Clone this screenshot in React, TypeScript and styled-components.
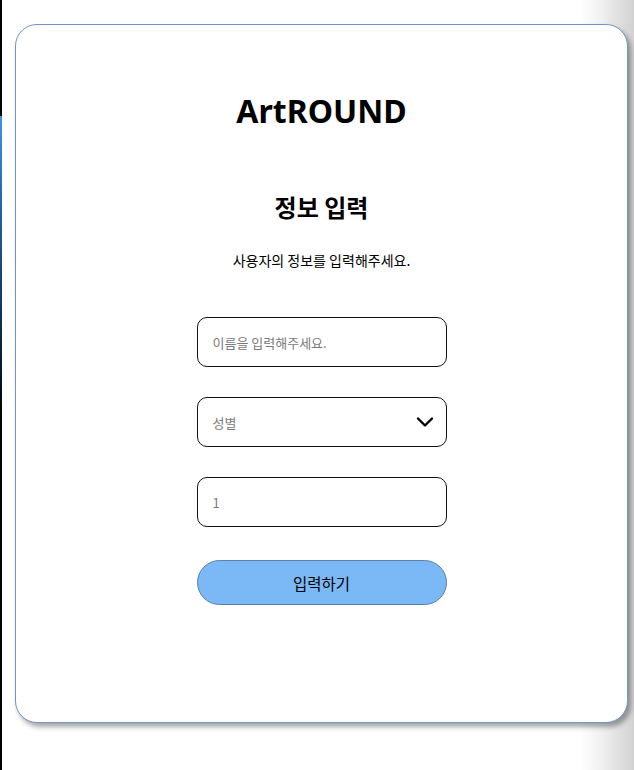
import React from "react";
import styled, { createGlobalStyle } from "styled-components";

const Global = createGlobalStyle`
  html, body { margin: 0; padding: 0; }
  body {
    width: 634px;
    min-height: 770px;
    font-family: "Noto Sans", "Noto Sans CJK KR", sans-serif;
    background:
      linear-gradient(to bottom, #000 0, #000 116px, #3d93e6 116px, #1d5a98 230px, #0a2747 340px, #000 420px, #000 100%) left top / 2px 100% no-repeat,
      linear-gradient(to right, #fff 0, #fff 580px, #f0f0f0 602px, #dedede 620px, #d2d2d2 634px);
  }
`;

const Page = styled.div`
  padding: 24px 0 0 15px;
  min-height: 746px;
`;

const Card = styled.div`
  box-sizing: border-box;
  width: 613px;
  height: 699px;
  border: 1px solid #6f96c6;
  border-radius: 22px;
  background: #fff;
  box-shadow: 3px 4px 5px rgba(0, 0, 0, 0.35);
  display: flex;
  flex-direction: column;
  align-items: center;
`;

const Logo = styled.h1`
  margin: 64px 0 0;
  font-family: "Noto Sans", "Open Sans", sans-serif;
  font-weight: 700;
  font-size: 32px;
  line-height: 44px;
  color: #000;
`;

const Heading = styled.h2`
  margin: 57px 0 0;
  font-family: "Noto Sans CJK KR", sans-serif;
  font-weight: 700;
  font-size: 24px;
  line-height: 34px;
  color: #000;
`;

const Sub = styled.p`
  margin: 26px 0 0;
  font-family: "Noto Sans CJK KR", sans-serif;
  font-size: 14px;
  line-height: 20px;
  color: #000;
`;

const Form = styled.form`
  margin-top: 47px;
  display: flex;
  flex-direction: column;
  gap: 30px;
  width: 250px;
`;

const Field = styled.div`
  box-sizing: border-box;
  height: 50px;
  border: 1px solid #111;
  border-radius: 10px;
  display: flex;
  align-items: center;
  padding: 0 12px 0 15px;
`;

const Input = styled.input`
  flex: 1;
  border: none;
  outline: none;
  background: transparent;
  padding: 0;
  font-family: "Noto Sans CJK KR", sans-serif;
  font-size: 13px;
  color: #222;
  &::placeholder { color: #7a7a7a; }
`;

const SelectText = styled.span`
  flex: 1;
  font-family: "Noto Sans CJK KR", sans-serif;
  font-size: 13px;
  color: #7a7a7a;
`;

const Button = styled.button`
  margin-top: 3px;
  box-sizing: border-box;
  height: 45px;
  border: 1px solid #5d80ad;
  border-radius: 23px;
  background: #7ab9f6;
  font-family: "Noto Sans CJK KR", sans-serif;
  font-size: 15.5px;
  color: #000;
  cursor: pointer;
`;

const Chevron = () => (
  <svg width="18" height="12" viewBox="0 0 18 12" fill="none">
    <path d="M2 2.5 L9 9.5 L16 2.5" stroke="#000" strokeWidth="2.4" strokeLinecap="round" strokeLinejoin="round" />
  </svg>
);

export default function App() {
  return (
    <>
      <Global />
      <Page>
        <Card>
          <Logo>ArtROUND</Logo>
          <Heading>정보 입력</Heading>
          <Sub>사용자의 정보를 입력해주세요.</Sub>
          <Form onSubmit={(e) => e.preventDefault()}>
            <Field>
              <Input placeholder="이름을 입력해주세요." />
            </Field>
            <Field>
              <SelectText>성별</SelectText>
              <Chevron />
            </Field>
            <Field>
              <Input placeholder="1" />
            </Field>
            <Button type="submit">입력하기</Button>
          </Form>
        </Card>
      </Page>
    </>
  );
}
